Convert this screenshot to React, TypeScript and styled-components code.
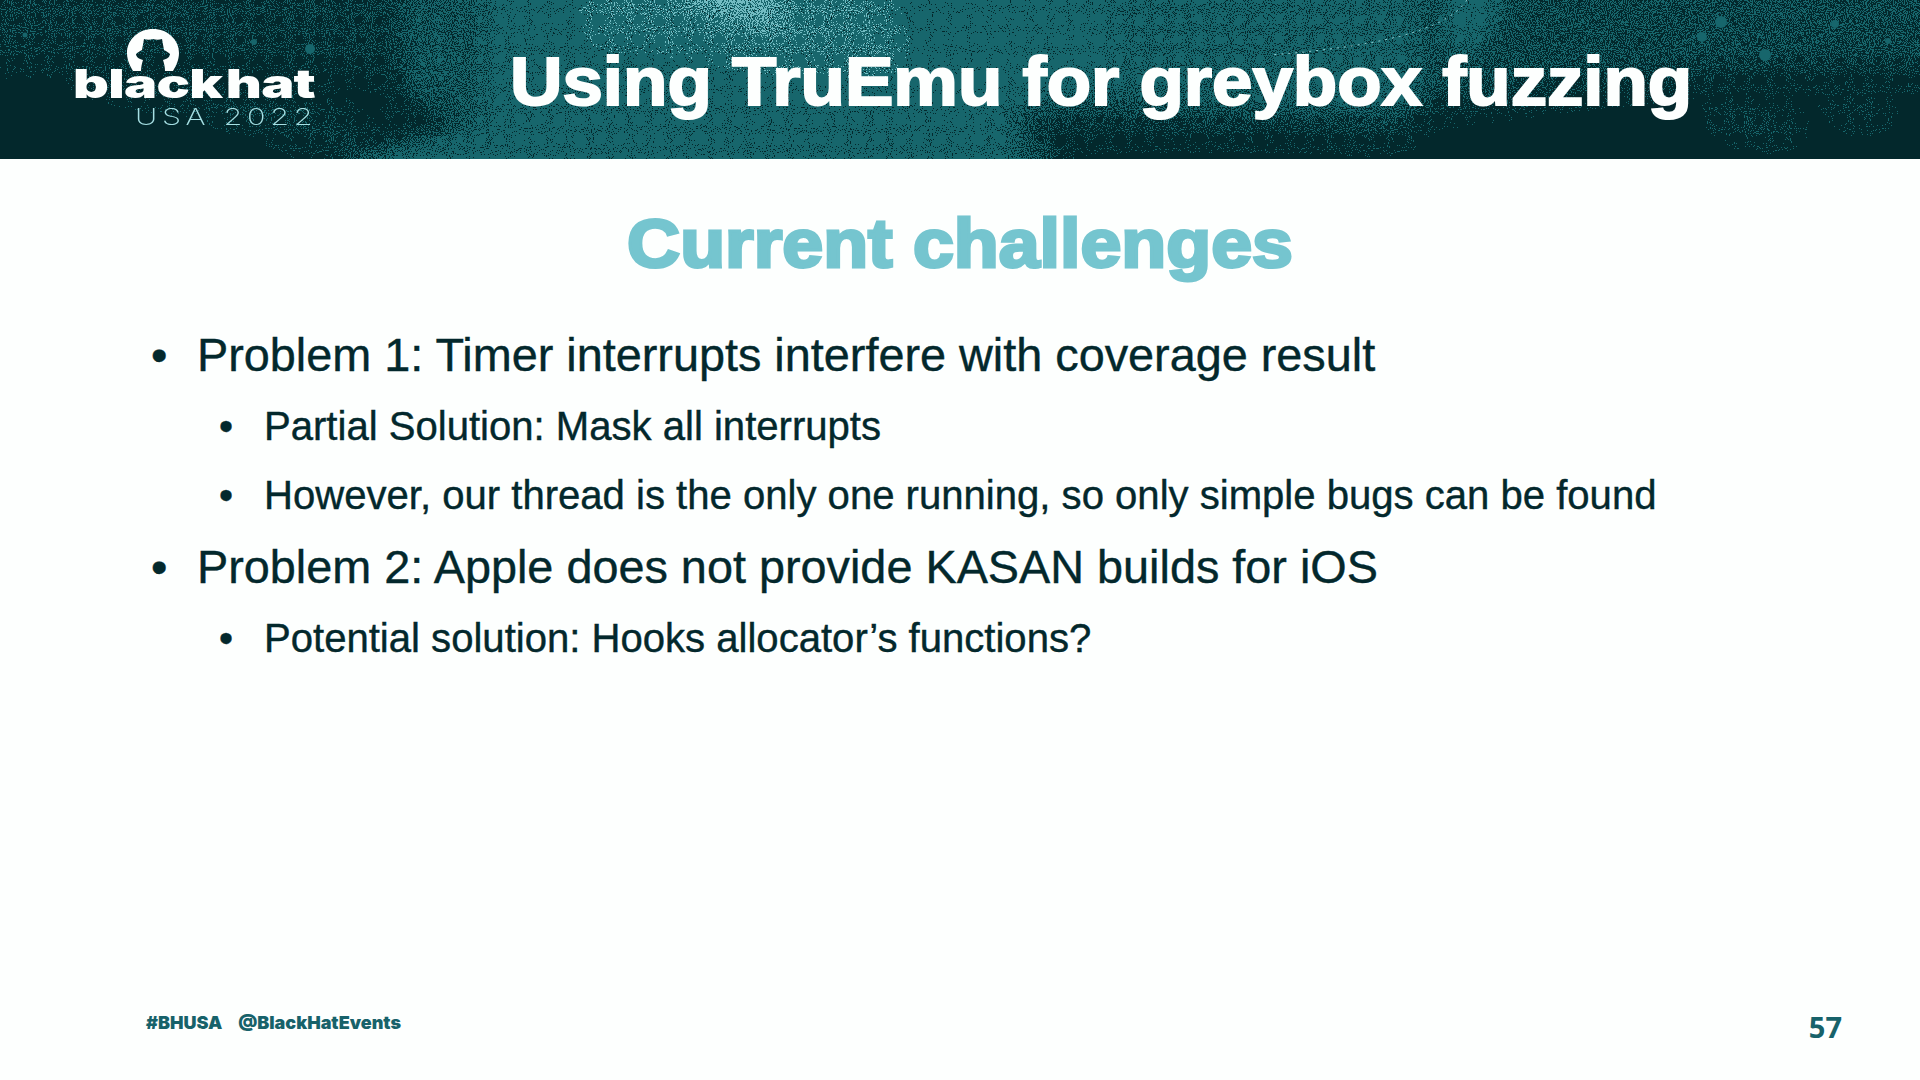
import React from "react";
import styled, { createGlobalStyle } from "styled-components";

const GlobalStyle = createGlobalStyle`
  html, body {
    margin: 0;
    padding: 0;
    background: #fdfffe;
  }
`;

const Slide = styled.div`
  width: 1920px;
  height: 1080px;
  display: flex;
  flex-direction: column;
  overflow: hidden;
  background: #fdfffe;
  font-family: "Liberation Sans", Arial, sans-serif;
`;

const Banner = styled.header`
  position: relative;
  height: 159px;
  flex: none;
  display: flex;
  align-items: center;
  overflow: hidden;
  background: #03282c;
`;

const BannerArt = styled.svg`
  position: absolute;
  inset: 0;
  width: 100%;
  height: 100%;
`;

const Logo = styled.div`
  position: relative;
  flex: none;
  width: 510px;
  height: 159px;
  display: flex;
  flex-direction: column;
  align-items: flex-start;
  padding: 29px 0 0 73px;
  box-sizing: border-box;
`;

const HatMark = styled.svg`
  display: block;
  width: 52px;
  height: 42px;
  margin-left: 54px;
  margin-bottom: -4px;
`;

const LogoWord = styled.div`
  font-family: Inter, "Liberation Sans", sans-serif;
  font-weight: 900;
  font-size: 40px;
  line-height: 33px;
  height: 33px;
  color: #fdfffe;
  letter-spacing: -0.5px;
  word-spacing: -5px;
  white-space: nowrap;
  transform: scaleX(1.39);
  transform-origin: left center;
`;

const LogoEvent = styled.div`
  margin: 8px 0 0 62px;
  font-family: Inter, "Liberation Sans", sans-serif;
  font-weight: 200;
  font-size: 23px;
  line-height: 18px;
  height: 18px;
  color: #a6e0e4;
  letter-spacing: 3.5px;
  white-space: nowrap;
  transform: scaleX(1.33);
  transform-origin: left center;
`;

const BannerTitle = styled.h1`
  position: relative;
  margin: 0;
  padding-top: 3px;
  font-size: 68px;
  font-weight: 700;
  line-height: 1;
  color: #fdfffe;
  white-space: nowrap;
  -webkit-text-stroke: 2px #fdfffe;
  transform: scaleX(1.068);
  transform-origin: left center;
`;

const Content = styled.main`
  flex: 1;
  display: flex;
  flex-direction: column;
  position: relative;
`;

const Heading = styled.h2`
  margin: 45px 0 0;
  font-size: 68px;
  font-weight: 700;
  line-height: 78px;
  text-align: center;
  color: #75c5cf;
  white-space: nowrap;
  -webkit-text-stroke: 3px #75c5cf;
  transform: scaleX(1.081);
`;

const Bullets = styled.ul`
  list-style: none;
  margin: 36px 0 0;
  padding: 0;
  display: flex;
  flex-direction: column;
`;

const Bullet = styled.li<{ $sub?: boolean }>`
  display: flex;
  align-items: baseline;
  color: #03282c;
  white-space: nowrap;
  -webkit-text-stroke: 0.4px #03282c;
  padding-left: ${(p) => (p.$sub ? "219px" : "151px")};
  font-size: ${(p) => (p.$sub ? "40.1px" : "46.8px")};
  line-height: ${(p) => (p.$sub ? "69px" : "74px")};
  &::before {
    content: "•";
    width: ${(p) => (p.$sub ? "45px" : "46px")};
    flex: none;
  }
`;

const Footer = styled.footer`
  position: absolute;
  left: 146px;
  right: 78px;
  bottom: 34px;
  display: flex;
  justify-content: space-between;
  align-items: flex-start;
`;

const Tags = styled.div`
  display: flex;
  gap: 16px;
  margin-top: 5px;
  font-family: Inter, "Liberation Sans", sans-serif;
  font-weight: 900;
  font-size: 18px;
  color: #17626a;
`;

const PageNumber = styled.div`
  font-family: "Open Sans", sans-serif;
  font-weight: 700;
  font-size: 29px;
  color: #17626a;
`;

const tealCoverage: [string, number][] = [
  ["M-60 -60H400V72C300 60 150 50 -60 58Z", 0.3],
  ["M400 -60H500V150C450 120 430 110 400 100Z", 0.6],
  ["M80 65C180 85 280 100 330 115C360 130 370 150 385 170H355C300 120 200 100 80 75Z", 0.35],
  ["M320 200C370 135 430 128 500 130V200Z", 0.9],
  ["M490 -60H1010V200H490Z", 0.92],
  ["M500 30C560 20 600 30 640 60C700 90 800 100 880 110C950 125 1000 120 1010 125V-60H500Z", 1],
  ["M1000 -60H1420V108C1300 115 1150 100 1000 92Z", 0.78],
  ["M1000 -60H1110V90C1070 95 1030 100 1000 110Z", 0.85],
  ["M1000 92C1150 100 1300 115 1420 108L1400 135C1250 125 1100 130 1000 132Z", 0.42],
  ["M1000 125C1040 130 1060 145 1070 200H1000Z", 0.6],
  ["M1420 -60H1980V72C1750 60 1600 85 1420 108Z", 0.46],
  ["M1450 -60H1525L1478 50L1445 45Z", 1],
  ["M1715 112C1755 112 1785 118 1795 128C1760 132 1730 125 1715 112Z", 0.6],
  ["M1830 85C1860 90 1880 100 1890 108L1860 120C1840 110 1830 100 1830 85Z", 0.22],
];

const lightCoverage: [string, number][] = [
  ["M600 -60H870C870 20 910 45 880 60C800 60 740 50 700 42C660 32 620 30 600 32Z", 0.24],
  ["M625 -60H745L790 32C740 25 680 15 625 -60Z", 0.6],
];

const specks: [number, number, number][] = [
  [310, 49, 5],
  [254, 42, 3],
  [25, 35, 2.500],
  [1702, 37, 5],
  [1721, 22, 6],
  [1765, 55, 6],
  [1835, 24, 4],
  [1888, 41, 3],
  [1077, 34, 3],
];

function DitherFilter({ id, color, seed }: { id: string; color: string; seed: number }) {
  return (
    <filter
      id={id}
      filterUnits="userSpaceOnUse"
      x="-60"
      y="-60"
      width="2040"
      height="280"
      colorInterpolationFilters="sRGB"
    >
      <feGaussianBlur in="SourceAlpha" stdDeviation="13" result="soft" />
      <feTurbulence type="fractalNoise" baseFrequency="0.95" numOctaves="1" seed={seed} />
      <feColorMatrix values="0 0 0 0 0  0 0 0 0 0  0 0 0 0 0  0 0 0 3 -1" result="noise" />
      <feComposite in="soft" in2="noise" operator="arithmetic" k1="0" k2="0.5" k3="0.5" k4="-0.005" />
      <feComponentTransfer result="dots">
        <feFuncA type="discrete" tableValues="0 1" />
      </feComponentTransfer>
      <feFlood floodColor={color} />
      <feComposite in2="dots" operator="in" />
    </filter>
  );
}

function BannerDither() {
  return (
    <BannerArt viewBox="0 0 1920 159" preserveAspectRatio="none">
      <defs>
        <DitherFilter id="ditherTeal" color="#17666c" seed={4} />
        <DitherFilter id="ditherLight" color="#72bcc2" seed={9} />
      </defs>
      <g filter="url(#ditherTeal)">
        {tealCoverage.map(([d, alpha]) => (
          <path key={d} d={d} fill="#000" fillOpacity={alpha} />
        ))}
      </g>
      <g filter="url(#ditherLight)">
        {lightCoverage.map(([d, alpha]) => (
          <path key={d} d={d} fill="#000" fillOpacity={alpha} />
        ))}
      </g>
      {specks.map(([cx, cy, r]) => (
        <circle key={cx} cx={cx} cy={cy} r={r} fill="#17666c" />
      ))}
      <path d="M1467 0C1450 25 1400 45 1270 55" stroke="#8fd0d4" strokeWidth="1" strokeDasharray="2 5" fill="none" />
    </BannerArt>
  );
}

export default function App() {
  return (
    <Slide>
      <GlobalStyle />
      <Banner>
        <BannerDither />
        <Logo>
          <HatMark viewBox="0 0 52 42">
            <path
              fillRule="evenodd"
              fill="#fdfffe"
              d="M26 0C11.600 0 0 10.500 0 24C0 31 3 37 6 42H14C14 38 15 34 16 31C12 30 9 28 9 25C11 23 13 22 15 21L17 10C20 11 23 11 26 10C29 11 32 11 35 10L37 21C39 22 41 23 43 25C43 28 40 30 36 31C37 34 38 38 38 42H46C49 37 52 31 52 24C52 10.500 40.400 0 26 0Z"
            />
          </HatMark>
          <LogoWord>black hat</LogoWord>
          <LogoEvent>USA 2022</LogoEvent>
        </Logo>
        <BannerTitle>Using TruEmu for greybox fuzzing</BannerTitle>
      </Banner>
      <Content>
        <Heading>Current challenges</Heading>
        <Bullets>
          <Bullet>Problem 1: Timer interrupts interfere with coverage result</Bullet>
          <Bullet $sub>Partial Solution: Mask all interrupts</Bullet>
          <Bullet $sub>However, our thread is the only one running, so only simple bugs can be found</Bullet>
          <Bullet>Problem 2: Apple does not provide KASAN builds for iOS</Bullet>
          <Bullet $sub>Potential solution: Hooks allocator’s functions?</Bullet>
        </Bullets>
        <Footer>
          <Tags>
            <span>#BHUSA</span>
            <span>@BlackHatEvents</span>
          </Tags>
          <PageNumber>57</PageNumber>
        </Footer>
      </Content>
    </Slide>
  );
}
